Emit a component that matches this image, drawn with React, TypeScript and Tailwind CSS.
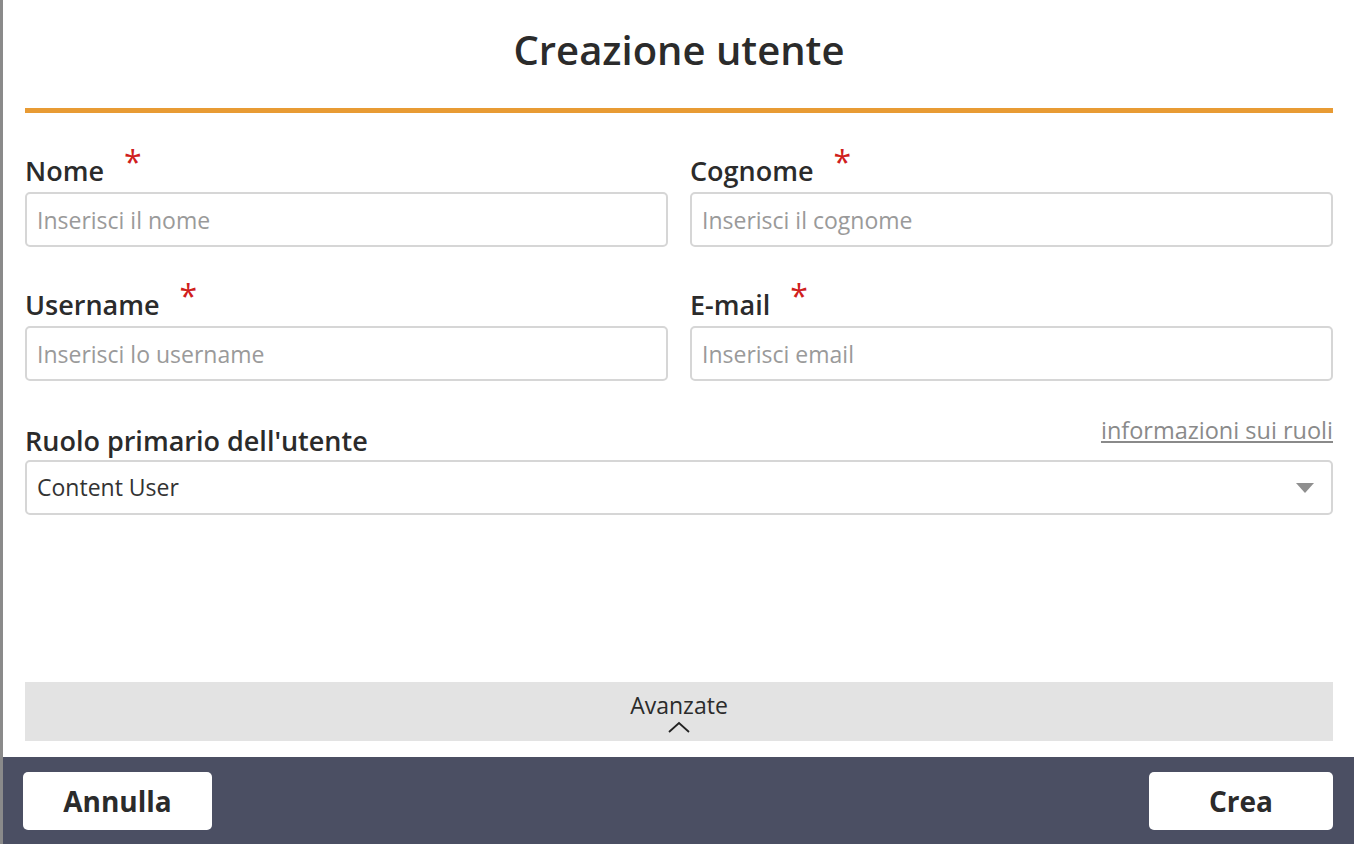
import React from 'react';

const Field = ({ label, placeholder }: { label: string; placeholder: string }) => (
  <div className="flex flex-col">
    <label className="flex items-start h-[49px] text-[27px] font-semibold text-[#2b2b2b] leading-none pt-[14px]">
      {label}
      <span className="ml-[20px] -mt-[11px] text-[32px] text-[#d0201c] font-normal">*</span>
    </label>
    <input
      placeholder={placeholder}
      className="h-[55px] rounded-[5px] border-2 border-[#d6d6d6] px-[10px] text-[23px] text-[#333] placeholder:text-[#9a9a9a] outline-none"
    />
  </div>
);

const App = () => {
  return (
    <div className="w-[1354px] h-[844px] bg-white flex flex-col border-l-[3px] border-[#8a8a8a] overflow-hidden" style={{ fontFamily: '"Open Sans", sans-serif' }}>
      <div className="flex-1 flex flex-col px-[22px] pr-[21px]">
        <h1 className="h-[108px] flex items-center justify-center text-[40px] font-semibold text-[#2b2b2b] pb-[8px]">Creazione utente</h1>
        <div className="h-[5px] bg-[#e89b34]" />
        <div className="grid grid-cols-2 gap-x-[22px] gap-y-[30px] mt-[30px]">
          <Field label="Nome" placeholder="Inserisci il nome" />
          <Field label="Cognome" placeholder="Inserisci il cognome" />
          <Field label="Username" placeholder="Inserisci lo username" />
          <Field label="E-mail" placeholder="Inserisci email" />
        </div>
        <div className="mt-[34px] flex items-end justify-between h-[45px] pb-[8px]">
          <span className="text-[27px] font-semibold text-[#2b2b2b] leading-none translate-y-[2px]">Ruolo primario dell'utente</span>
          <a href="#" className="text-[23.5px] text-[#8a8a8a] underline leading-none -translate-y-[10px]">informazioni sui ruoli</a>
        </div>
        <div className="h-[55px] rounded-[5px] border-2 border-[#d6d6d6] px-[10px] flex items-center justify-between text-[23px] text-[#333]">
          <span>Content User</span>
          <svg width="20" height="12" viewBox="0 0 20 12" className="mr-[6px]"><path d="M1 1h18L10 11z" fill="#8f8f8f" /></svg>
        </div>
        <div className="flex-1" />
        <div className="h-[59px] bg-[#e3e3e3] flex flex-col items-center justify-center mb-[16px]">
          <span className="text-[23px] text-[#2b2b2b] leading-none mt-[4px]">Avanzate</span>
          <svg width="24" height="14" viewBox="0 0 24 14" className="mt-[3px]"><path d="M2 12L12 3l10 9" fill="none" stroke="#222" strokeWidth="1.8" /></svg>
        </div>
      </div>
      <div className="h-[87px] bg-[#4b4f63] flex items-center justify-between px-[20px] pr-[21px]">
        <button className="w-[189px] h-[58px] bg-white rounded-[5px] text-[28px] font-bold text-[#2b2b2b]">Annulla</button>
        <button className="w-[184px] h-[58px] bg-white rounded-[5px] text-[28px] font-bold text-[#2b2b2b]">Crea</button>
      </div>
    </div>
  );
};

export default App;
